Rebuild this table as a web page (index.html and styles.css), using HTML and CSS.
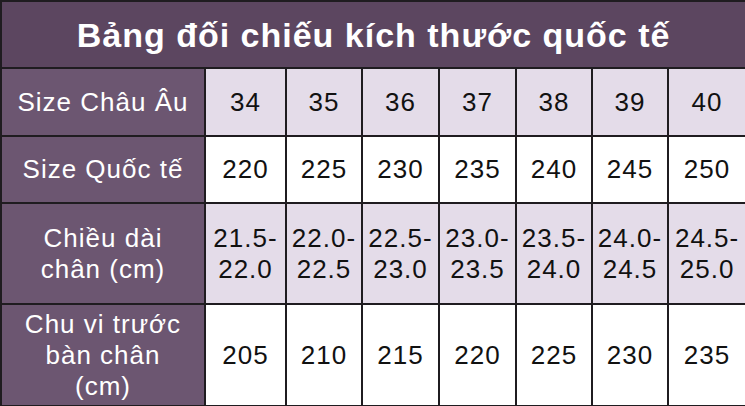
FILE: index.html
```html
<!DOCTYPE html>
<html lang="vi">
<head>
<meta charset="utf-8">
<title>Bảng đối chiếu kích thước quốc tế</title>
<link rel="stylesheet" href="styles.css">
</head>
<body>
<table class="size-table">
  <colgroup>
    <col class="c-label">
    <col class="c1"><col class="c2"><col class="c3"><col class="c4"><col class="c5"><col class="c6"><col class="c7">
  </colgroup>
  <thead>
    <tr class="r-title"><th colspan="8" class="title">Bảng đối chiếu kích thước quốc tế</th></tr>
  </thead>
  <tbody>
    <tr class="r1 shade">
      <th class="label">Size Châu Âu</th>
      <td>34</td><td>35</td><td>36</td><td>37</td><td>38</td><td>39</td><td>40</td>
    </tr>
    <tr class="r2">
      <th class="label">Size Quốc tế</th>
      <td>220</td><td>225</td><td>230</td><td>235</td><td>240</td><td>245</td><td>250</td>
    </tr>
    <tr class="r3 shade">
      <th class="label">Chiều dài<br>chân (cm)</th>
      <td>21.5-<br>22.0</td><td>22.0-<br>22.5</td><td>22.5-<br>23.0</td><td>23.0-<br>23.5</td><td>23.5-<br>24.0</td><td>24.0-<br>24.5</td><td>24.5-<br>25.0</td>
    </tr>
    <tr class="r4">
      <th class="label">Chu vi trước<br>bàn chân<br>(cm)</th>
      <td>205</td><td>210</td><td>215</td><td>220</td><td>225</td><td>230</td><td>235</td>
    </tr>
  </tbody>
</table>
</body>
</html>
```
FILE: styles.css
```css
html, body {
  margin: 0;
  padding: 0;
  background: #1e1a1f;
}
.size-table {
  width: 745px;
  height: 406px;
  table-layout: fixed;
  border-collapse: collapse;
  font-family: "Liberation Sans", Arial, sans-serif;
}
.c-label { width: 204px; }
.c1 { width: 81px; }
.c2 { width: 76px; }
.c3 { width: 77px; }
.c4 { width: 77px; }
.c5 { width: 76px; }
.c6 { width: 76px; }
.c7 { width: 78px; }

.size-table th,
.size-table td {
  border: 2px solid #1f1c20;
  padding: 0;
  text-align: center;
  vertical-align: middle;
  font-size: 26px;
  letter-spacing: 1px;
  line-height: 31px;
  font-weight: normal;
  color: #111;
}
.r-title { height: 67px; }
.r1 { height: 68px; }
.r2 { height: 67px; }
.r3 { height: 101px; }
.r4 { height: 102px; }

.size-table .title {
  background: #5c4660;
  color: #fff;
  font-weight: bold;
  font-size: 34px;
  letter-spacing: 1px;
  line-height: 38px;
}
.size-table .label {
  background: #6c5671;
  color: #fff;
}
.shade td { background: #e4dce9; }
.r2 td, .r4 td { background: #fff; }
```
